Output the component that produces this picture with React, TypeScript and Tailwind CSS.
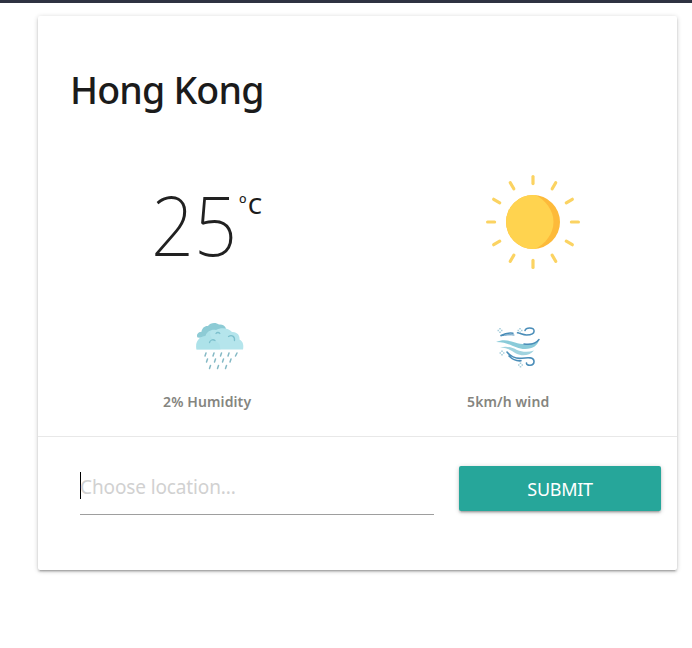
const CARD_SHADOW =
  "shadow-[0_2px_2px_0_rgba(0,0,0,0.14),0_3px_1px_-2px_rgba(0,0,0,0.12),0_1px_5px_0_rgba(0,0,0,0.2)]";

const RAYS = [0, 30, 60, 90, 120, 150, 180, 210, 240, 270, 300, 330];

function SunIcon() {
  return (
    <svg width="96" height="96" viewBox="0 0 96 96" fill="none">
      <circle cx="48" cy="48" r="27" fill="#fdba3a" />
      <path
        d="M48 21a27 27 0 1 0 0 54c.8 0 1.600 0 2.400-.1C60 70 68.500 60 68.500 48S60 26 50.400 21.100C49.600 21 48.800 21 48 21z"
        fill="#ffd34f"
      />
      {RAYS.map((a) => (
        <path
          key={a}
          d="M48 2.600v7"
          stroke="#fbd362"
          strokeWidth="3.200"
          strokeLinecap="round"
          transform={`rotate(${a} 48 48)`}
        />
      ))}
    </svg>
  );
}

function RainIcon() {
  return (
    <svg width="50" height="50" viewBox="0 0 50 50" fill="none">
      <path
        d="M2.500 15.500c-1.500-3 .5-5.500 4-5.800C7 6 10 3.500 13 4 15 .5 21 0 24 2.500c3-.5 6 1 7 4L18 17z"
        fill="#8dcbd5"
      />
      <path
        d="M1.500 27.500C0 20 4 14.500 10.500 14 12 9 17 7 21 8c5-3 13-2 16 2 5-.5 8 3.500 7.500 7.500C48 19 49 23.500 48 27.500z"
        fill="#b5e5ec"
      />
      <path
        d="M1.500 27.500C0 20 4 14.500 10.500 14c1-2.500 2.500-4 5-5-2 6 3 9 8 12 2 2 1 4.500 2 6.500z"
        fill="#a9dfe7"
        opacity=".6"
      />
      <path
        d="M21 11.500c1-1.500 3-1.200 3.800 0M33.500 14.500c3-2 6.500-.5 6 4M14.500 20.500c.5-2.500 3.500-3.500 5.500-2"
        stroke="#7dc0cd"
        strokeWidth="1.300"
        strokeLinecap="round"
      />
      <path
        d="M11 31l-1 3M19 31l-1 3M26.500 31l-1 3M34 31l-1 3M42 31l-1.500 3M12.500 37l-1 3M20.500 37l-1 3M28.500 37l-1 3M36 37l-1 3M15.500 43.500l-1 3M23.500 43.500l-1 3M31.500 43.500l-1 3"
        stroke="#85b9c5"
        strokeWidth="1.500"
        strokeLinecap="round"
      />
    </svg>
  );
}

function WindIcon() {
  return (
    <svg width="44" height="44" viewBox="0 0 44 44" fill="none">
      <path
        d="M0 16c7-3 13-1.500 19 .5 8 2.500 17 2.500 24-2.500-1 5-6 9-14 9-10 0-15-7-29-7z"
        fill="#8acbd9"
      />
      <path
        d="M4 21.500c7-2 12 0 17 2.500 5 2 11 2.500 17 .5-5 5.500-12 6-18 3-5-3-8-6-16-6z"
        fill="#a0d3df"
      />
      <path
        d="M5 9.500c4-2 8-2.800 12-2.300M21.500 6.800c3 .5 5.500 2.200 9 2.200 5 0 8-1.500 7.500-4.500-.5-3.500-8-3.500-9 0M43 13.500c-3 4-8 5.500-15 4.500"
        stroke="#4a8db8"
        strokeWidth="1.500"
        strokeLinecap="round"
      />
      <path d="M5 9.800c5-1 9-1.300 13-.8" stroke="#4a8db8" strokeWidth="1" strokeLinecap="round" />
      <path
        d="M11 26c4 5 8 7 15 6.200 6-.7 12-1.200 12 3.300 0 5-8 4.500-7.500 1.500M13 30c4 4 8 5.200 12 4.800"
        stroke="#4a8db8"
        strokeWidth="1.600"
        strokeLinecap="round"
      />
      <path
        d="M4 2v1.500M4 5.500V7M1.500 4.500H3M5 4.500h1.500M24 2v1.500M24 5.500V7M21.500 4.500H23M25 4.500h1.500M6 24.500V26M6 28v1.500M3.500 27H5M7 27h1.500M24.500 36.500V38M24.500 40v1.500M22 39h1.500M25.500 39H27"
        stroke="#a9cfdd"
        strokeWidth="1.600"
      />
    </svg>
  );
}

export default function App() {
  return (
    <div className="h-[648px] w-[692px] overflow-hidden bg-white font-['Noto_Sans','Open_Sans',sans-serif] text-[#212121]">
      <div className="h-[3px] bg-[#2f3241]" />
      <main
        className={`mt-[13px] ml-[38px] flex h-[554px] w-[639px] flex-col rounded-[2px] bg-white ${CARD_SHADOW}`}
      >
        <section className="h-[421px] border-b border-[#e8e8e8]">
          <h1 className="h-[100px] pt-[48px] pl-8 text-[37.5px] leading-[52px] font-medium tracking-[-0.8px] whitespace-nowrap text-[#1b1b1b]">
            Hong Kong
          </h1>
          <div className="mt-[58px] flex h-[106px] pl-[113px]">
            <div className="flex w-[334px] items-start">
              <span className="mt-[-7px] w-[84px] origin-left scale-x-[0.9] text-[84px] leading-[114px] font-extralight">
                25
              </span>
              <span className="mt-[16px] ml-[4px] flex text-[22px] leading-[30px] font-medium text-[#1b1b1b]">
                <span className="mt-[-2px] w-[9px] text-[20px] font-normal">º</span>C
              </span>
            </div>
            <SunIcon />
          </div>
          <div className="mt-[42px] flex pl-[157px]">
            <div className="w-[301px]">
              <RainIcon />
            </div>
            <div className="pt-[4px]">
              <WindIcon />
            </div>
          </div>
          <div className="mt-[20px] flex pl-[125px] text-[14px] leading-[20px] font-semibold tracking-[0.12px] text-[#85857f]">
            <p className="w-[304px]">2% Humidity</p>
            <p>5km/h wind</p>
          </div>
        </section>
        <form className="flex pt-[29px] pl-[42px]" onSubmit={(e) => e.preventDefault()}>
          <div className="flex h-[49px] w-[354px] border-b border-[#9e9e9e]">
            <span className="mt-[6px] h-[27px] w-px bg-black" />
            <span className="mt-[7px] ml-[-1px] text-[19px] leading-[28px] tracking-[-0.12px] text-[#d1d1d1]">
              Choose location...
            </span>
          </div>
          <button
            type="submit"
            className={`ml-[25px] h-[45px] w-[202px] rounded-[2px] bg-[#26a69a] pt-[2px] text-[18px] tracking-[-0.3px] text-white ${CARD_SHADOW}`}
          >
            SUBMIT
          </button>
        </form>
      </main>
    </div>
  );
}
